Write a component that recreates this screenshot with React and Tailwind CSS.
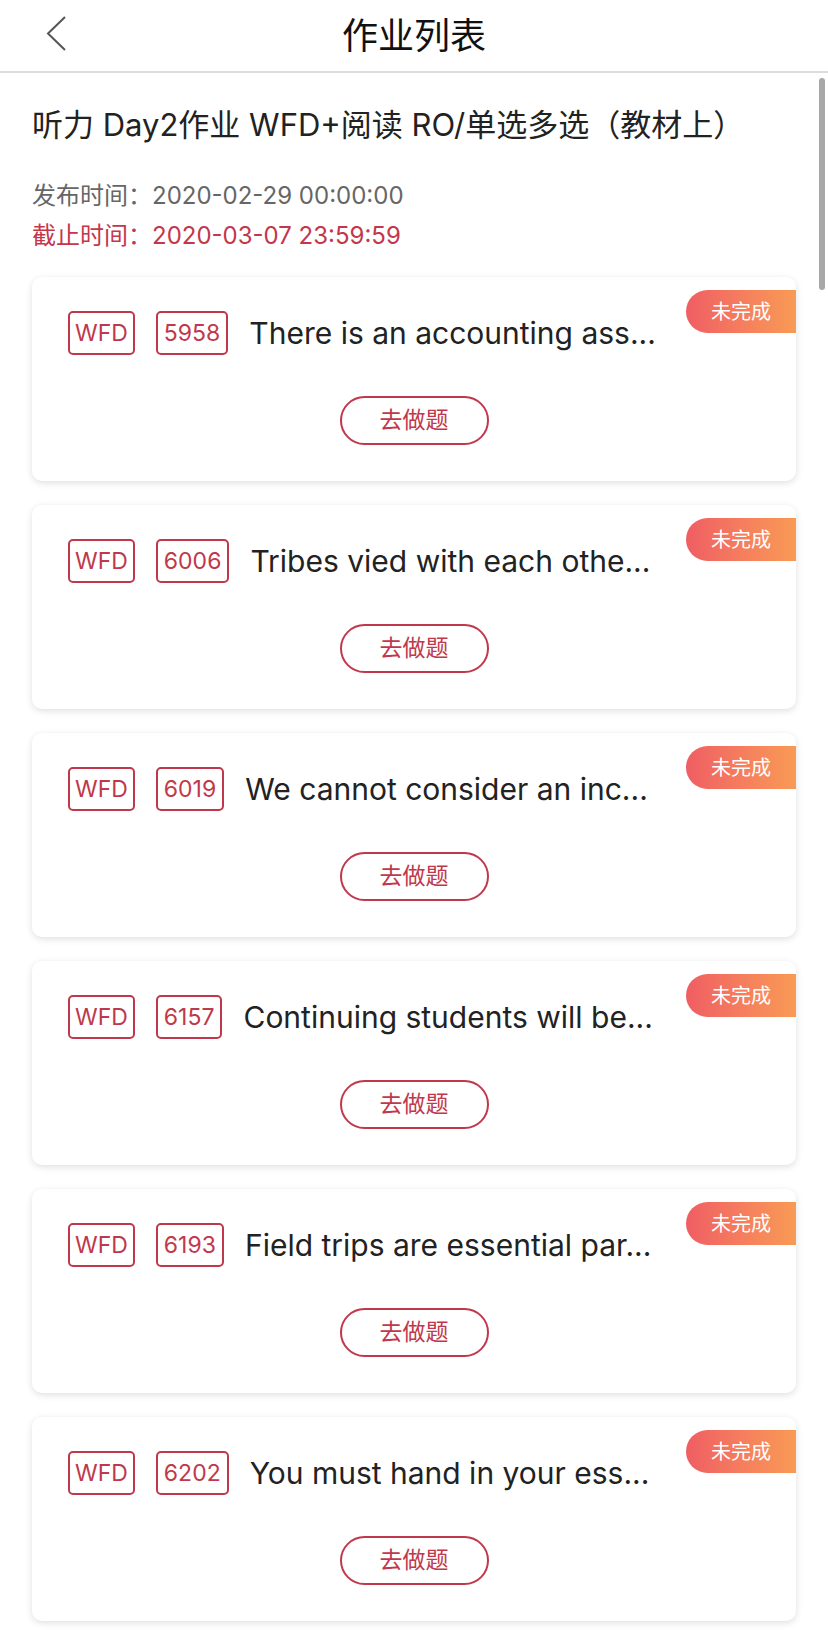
import React from 'react';

const tasks = [
  { id: '5958', text: 'There is an accounting ass...' },
  { id: '6006', text: 'Tribes vied with each othe...' },
  { id: '6019', text: 'We cannot consider an inc...' },
  { id: '6157', text: 'Continuing students will be...' },
  { id: '6193', text: 'Field trips are essential par...' },
  { id: '6202', text: 'You must hand in your ess...' },
];

const font = { fontFamily: 'Inter, "Noto Sans CJK SC", sans-serif' };

function TaskCard({ task }) {
  return (
    <div className="relative h-[204px] rounded-[10px] bg-white shadow-[0_2px_7px_rgba(0,0,0,0.13)] pt-[34px] pl-[36px]">
      {/* status badge */}
      <div className="absolute right-0 top-[13px] flex h-[43px] w-[110px] items-center justify-center rounded-l-full bg-gradient-to-r from-[#ef5d63] to-[#f99a55] text-[20px] text-white">
        未完成
      </div>

      <div className="flex h-[44px] items-center">
        <span className="flex h-[44px] items-center rounded-[5px] border-2 border-[#c0384b] px-[5px] text-[23px] text-[#c0384b]">
          WFD
        </span>
        <span className="ml-[21px] flex h-[44px] items-center rounded-[5px] border-2 border-[#c0384b] px-[6px] text-[23px] text-[#c0384b]">
          {task.id}
        </span>
        <span className="ml-[21px] whitespace-nowrap text-[30px] text-[#222]">{task.text}</span>
      </div>

      <div className="mt-[41px] flex justify-center pr-[36px]">
        <button className="flex h-[49px] w-[149px] items-center justify-center rounded-full border-2 border-[#c0384b] text-[23px] text-[#c0384b]">
          去做题
        </button>
      </div>
    </div>
  );
}

export default function App() {
  return (
    <div className="relative h-[1630px] w-[828px] overflow-hidden bg-white" style={font}>
      {/* header */}
      <div className="relative flex h-[73px] items-center justify-center border-b-2 border-[#dcdcdc]">
        <svg
          className="absolute left-[46px] top-[16px]"
          width="22"
          height="36"
          viewBox="0 0 22 36"
          fill="none"
        >
          <polyline points="19,1 2,17.5 19,34" stroke="#555" strokeWidth="2" />
        </svg>
        <h1 className="text-[36px] text-[#111]">作业列表</h1>
      </div>

      {/* scrollbar */}
      <div className="absolute right-[3px] top-[78px] h-[212px] w-[6px] rounded-full bg-[#a8a8a8]" />

      <div className="px-[32px] pt-[32px]">
        <h2 className="text-[31px] leading-[40px] text-[#222]">
          听力 Day2作业 WFD+阅读 RO/单选多选（教材上）
        </h2>
        <div className="mt-[31px] text-[24px] leading-[40px]">
          <p className="text-[#666]">发布时间：2020-02-29 00:00:00</p>
          <p className="text-[#c4364c]">截止时间：2020-03-07 23:59:59</p>
        </div>

        <div className="mt-[21px] flex flex-col gap-[24px]">
          {tasks.map((t) => (
            <TaskCard key={t.id} task={t} />
          ))}
        </div>
      </div>
    </div>
  );
}
